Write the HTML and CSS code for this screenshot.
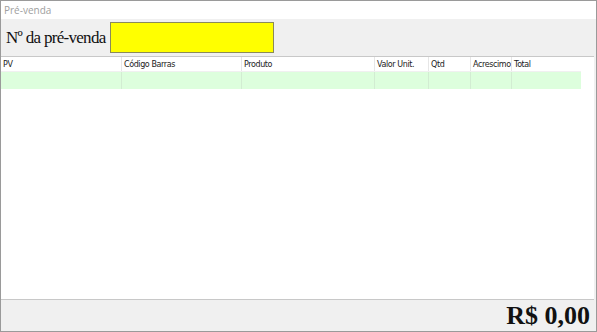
FILE: index.html
```html
<!DOCTYPE html>
<html lang="pt-BR">
<head>
  <meta charset="UTF-8" />
  <title>Pré-venda</title>
  <link rel="stylesheet" href="styles.css">
</head>
<body>
<div class="window">
  <div class="titlebar">Pré-venda</div>

  <div class="search">
    <label for="numero">Nº da pré-venda</label>
    <input id="numero" class="numero" type="text">
  </div>

  <div class="grid">
    <div class="row header">
      <div class="c pv">PV</div>
      <div class="c cod">Código Barras</div>
      <div class="c prod">Produto</div>
      <div class="c valor">Valor Unit.</div>
      <div class="c qtd">Qtd</div>
      <div class="c acr">Acrescimo</div>
      <div class="c total">Total</div>
    </div>
    <div class="row item">
      <div class="c pv"></div>
      <div class="c cod"></div>
      <div class="c prod"></div>
      <div class="c valor"></div>
      <div class="c qtd"></div>
      <div class="c acr"></div>
      <div class="c total"></div>
    </div>
  </div>

  <div class="footer">
    <span class="soma">R$ 0,00</span>
  </div>
</div>
</body>
</html>
```

FILE: styles.css
```css
body {
  margin: 0;
  background: #fff;
  font-family: Tahoma, "DejaVu Sans", "Liberation Sans", sans-serif;
}

.window {
  width: 597px;
  height: 332px;
  box-sizing: border-box;
  border: 1px solid #9a9a9a;
  display: flex;
  flex-direction: column;
  background: #f0f0f0;
}

.titlebar {
  height: 18px;
  background: #fff;
  color: #a0a0a0;
  font-family: "Open Sans", "Liberation Sans", sans-serif;
  font-size: 10px;
  line-height: 18px;
  padding-left: 3px;
}

.search {
  height: 37px;
  display: flex;
  align-items: center;
  gap: 4px;
  padding-left: 5px;
}

.search label {
  font-family: "Liberation Serif", serif;
  font-size: 17px;
  letter-spacing: -0.7px;
  color: #111;
}

.numero {
  width: 162px;
  height: 29px;
  margin: 0;
  padding: 0;
  border: 1px solid #8a8a5a;
  background: #ffff00;
  outline: none;
}

.grid {
  flex: 1;
  background: #fff;
  border-top: 1px solid #c8c8c8;
  border-bottom: 1px solid #c8c8c8;
  margin-right: 2px;
}

.row {
  display: flex;
  width: 580px;
}

.header {
  height: 14px;
  border-bottom: 1px solid #f0f0f0;
}

.header .c {
  font-size: 8px;
  line-height: 15px;
  color: #222;
  padding-left: 2px;
  font-family: "DejaVu Sans", sans-serif;
  letter-spacing: -0.4px;
}

.item {
  height: 17px;
  background: #ddfedd;
}

.c {
  box-sizing: border-box;
  border-right: 1px solid #e6e6e6;
  overflow: hidden;
  white-space: nowrap;
}

.item .c {
  border-right-color: #d2ecd2;
}

.pv { width: 121px; }
.cod { width: 120px; }
.prod { width: 133px; }
.valor { width: 54px; }
.qtd { width: 42px; }
.acr { width: 41px; }
.total { width: 69px; border-right: none; }

.footer {
  height: 31px;
  display: flex;
  justify-content: flex-end;
  align-items: center;
  padding-right: 6px;
}

.soma {
  font-family: "Liberation Serif", serif;
  font-weight: bold;
  font-size: 26px;
  color: #111;
}
```
